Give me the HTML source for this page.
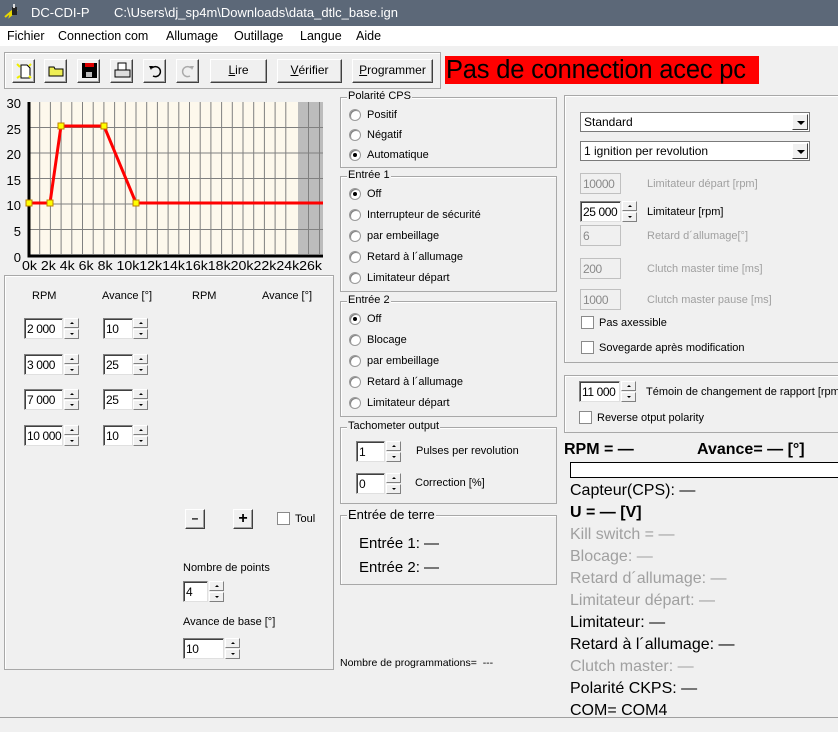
<!DOCTYPE html>
<html><head><meta charset="utf-8"><style>
*{box-sizing:border-box}
body{margin:0;width:838px;height:732px;background:#f0f0f0;font-family:"Liberation Sans",sans-serif;font-size:11px;color:#000;position:relative;overflow:hidden}
.a{position:absolute;white-space:nowrap}
.g{position:absolute;border:1px solid #a8a8a8;box-shadow:inset 1px 1px 0 #fff}
.gl{position:absolute;top:-8px;left:6px;background:#f0f0f0;padding:0 1px;font-size:11px}
.r{position:absolute;width:12px;height:12px;border-radius:50%;background:#fff;border:1px solid #9a9a9a;box-shadow:inset 1px 1px 0 #808080}
.r.on::after{content:"";position:absolute;left:3px;top:3px;width:4px;height:4px;border-radius:50%;background:#000}
.in{position:absolute;height:21px;background:#fff;border:1px solid;border-color:#808080 #e0e0e0 #e0e0e0 #808080;box-shadow:inset 1px 1px 0 #404040;padding:3px 0 0 2px;font-size:12px;white-space:nowrap;overflow:hidden;letter-spacing:-0.4px}
.in.d{color:#8a8a8a;background:#f0f0f0;box-shadow:none;border-color:#c0c0c0}
.sp{position:absolute;width:15px;height:21px}
.sp i{display:block;height:10px;background:#f0f0f0;border:1px solid;border-color:#fff #808080 #808080 #fff;margin-bottom:1px;position:relative}
.sp i::after{content:"";position:absolute;left:5px;top:3px;border-left:2px solid transparent;border-right:2px solid transparent}
.sp i.u::after{border-bottom:2px solid #000}
.sp i.dn::after{border-top:2px solid #000}
.btn{position:absolute;height:24px;background:#f0f0f0;border:1px solid;border-color:#fff #404040 #404040 #fff;box-shadow:inset -1px -1px 0 #a0a0a0;text-align:center;line-height:21px;font-size:12px}
.cb{position:absolute;width:13px;height:13px;background:#fff;border:1px solid #8a8a8a}
.dis{color:#a0a0a0}
.big{font-size:16px}
.sel{position:absolute;height:20px;background:#fff;border:1px solid #7a7a7a;font-size:12px;padding:2px 3px}
.sel b{position:absolute;right:1px;top:1px;width:16px;height:16px;background:#f0f0f0;border:1px solid;border-color:#fff #404040 #404040 #fff}
.sel b::after{content:"";position:absolute;left:4px;top:6px;border-left:4px solid transparent;border-right:4px solid transparent;border-top:4px solid #000}
</style></head><body>
<!-- title -->
<div class="a" style="left:0;top:0;width:838px;height:26px;background:#5c6878"></div>
<svg class="a" style="left:3px;top:3px" width="20" height="18"><path d="M2 14 L8 9 L7 13 L14 7" stroke="#e8d800" stroke-width="2" fill="none"/><rect x="9" y="4" width="5" height="8" fill="#222"/><rect x="10" y="1" width="2" height="4" fill="#ddd"/></svg>
<div class="a" style="left:31px;top:5px;color:#fff;font-size:13px">DC-CDI-P</div>
<div class="a" style="left:114px;top:5px;color:#fff;font-size:13px">C:\Users\dj_sp4m\Downloads\data_dtlc_base.ign</div>
<!-- menu -->
<div class="a" style="left:0;top:26px;width:838px;height:20px;background:#fff"></div>
<div class="a" style="left:7px;top:29px;font-size:12.5px">Fichier</div>
<div class="a" style="left:58px;top:29px;font-size:12.5px">Connection com</div>
<div class="a" style="left:166px;top:29px;font-size:12.5px">Allumage</div>
<div class="a" style="left:234px;top:29px;font-size:12.5px">Outillage</div>
<div class="a" style="left:300px;top:29px;font-size:12.5px">Langue</div>
<div class="a" style="left:356px;top:29px;font-size:12.5px">Aide</div>
<!-- toolbar -->
<div class="g" style="left:4px;top:52px;width:437px;height:37px"></div>
<div class="btn" style="left:12px;top:59px;width:23px"><svg width="20" height="20" style="margin-top:1px"><path d="M7 4h6l3 3v10H7z" fill="#fff" stroke="#000"/><path d="M3 3l3 3M17 3l-2 2M3 17l3-2M17 17l-2-2" stroke="#ee0" stroke-width="2"/></svg></div>
<div class="btn" style="left:44px;top:59px;width:23px"><svg width="20" height="20"><path d="M3 7h5l1 2h8v7H3z" fill="#ee5" stroke="#000"/></svg></div>
<div class="btn" style="left:77px;top:59px;width:23px"><svg width="20" height="20"><rect x="3" y="3" width="15" height="15" fill="#000"/><rect x="6" y="3" width="9" height="4" fill="#d00"/><rect x="7" y="12" width="6" height="5" fill="#bbb"/></svg></div>
<div class="btn" style="left:110px;top:59px;width:23px"><svg width="20" height="20"><rect x="6" y="3" width="8" height="7" fill="#fff" stroke="#000"/><rect x="3" y="10" width="15" height="7" fill="#ddd" stroke="#000"/></svg></div>
<div class="btn" style="left:143px;top:59px;width:23px"><svg width="20" height="20"><path d="M7 8a5 5 0 1 1 1 8" fill="none" stroke="#000" stroke-width="1.5"/><path d="M4 6l4 0l-2 4z" fill="#000"/></svg></div>
<div class="btn" style="left:176px;top:59px;width:23px"><svg width="20" height="20"><path d="M13 8a5 5 0 1 0 -1 8" fill="none" stroke="#aaa" stroke-width="1.5"/><path d="M16 6l-4 0l2 4z" fill="#aaa"/></svg></div>
<div class="btn" style="left:210px;top:59px;width:57px"><u>L</u>ire</div>
<div class="btn" style="left:277px;top:59px;width:65px"><u>V</u>érifier</div>
<div class="btn" style="left:352px;top:59px;width:81px"><u>P</u>rogrammer</div>
<div class="a" style="left:445px;top:56px;width:314px;height:28px;background:#f00;font-size:25.5px;line-height:29px;padding-left:1px;letter-spacing:-0.2px">Pas de connection acec pc</div>
<!-- chart -->
<svg class="a" style="left:0;top:95px" width="335" height="180" font-family="Liberation Sans" font-size="12">
<g transform="translate(0,-95)">
<rect x="29" y="102" width="269" height="152" fill="#fdf8ec"/>
<rect x="298" y="102" width="25" height="152" fill="#bcbcbc"/>
<g stroke="#808080" stroke-width="1">
<path d="M39.7 102V254M50.4 102V254M61.1 102V254M71.8 102V254M82.5 102V254M93.2 102V254M103.9 102V254M114.6 102V254M125.3 102V254M136 102V254M146.7 102V254M157.4 102V254M168.1 102V254M178.8 102V254M189.5 102V254M200.2 102V254M210.9 102V254M221.6 102V254M232.3 102V254M243 102V254M253.7 102V254M264.4 102V254M275.1 102V254M285.8 102V254M308.5 102V254M319.5 102V254"/>
<path d="M29 127.5H323M29 153H323M29 178.5H323M29 204H323M29 229.5H323"/>
</g>
<path d="M29 102V256H323" stroke="#000" stroke-width="3" fill="none"/>
<path d="M29 203H50L61 126H104L136 203H323" stroke="#f00" stroke-width="3" fill="none"/>
<g fill="#ff0" stroke="#c08000"><rect x="26" y="200" width="6" height="6"/><rect x="47" y="200" width="6" height="6"/><rect x="58" y="123" width="6" height="6"/><rect x="101" y="123" width="6" height="6"/><rect x="133" y="200" width="6" height="6"/></g>
<g text-anchor="end" font-size="13"><text x="21" y="108">30</text><text x="21" y="134">25</text><text x="21" y="159">20</text><text x="21" y="185">15</text><text x="21" y="210">10</text><text x="21" y="236">5</text><text x="21" y="262">0</text></g>
<text x="22" y="270" font-size="13" textLength="300" lengthAdjust="spacingAndGlyphs">0k 2k 4k 6k 8k 10k12k14k16k18k20k22k24k26k</text>
</g></svg>
<!-- left panel -->
<div class="g" style="left:4px;top:275px;width:330px;height:395px"></div>
<div class="a" style="left:32px;top:290px">RPM</div>
<div class="a" style="left:102px;top:290px">Avance [°]</div>
<div class="a" style="left:192px;top:290px">RPM</div>
<div class="a" style="left:262px;top:290px">Avance [°]</div>
<div class="in" style="left:24px;top:318px;width:39px">2 000</div><div class="sp" style="left:64px;top:318px"><i class="u"></i><i class="dn"></i></div>
<div class="in" style="left:103px;top:318px;width:30px">10</div><div class="sp" style="left:133px;top:318px"><i class="u"></i><i class="dn"></i></div>
<div class="in" style="left:24px;top:354px;width:39px">3 000</div><div class="sp" style="left:64px;top:354px"><i class="u"></i><i class="dn"></i></div>
<div class="in" style="left:103px;top:354px;width:30px">25</div><div class="sp" style="left:133px;top:354px"><i class="u"></i><i class="dn"></i></div>
<div class="in" style="left:24px;top:389px;width:39px">7 000</div><div class="sp" style="left:64px;top:389px"><i class="u"></i><i class="dn"></i></div>
<div class="in" style="left:103px;top:389px;width:30px">25</div><div class="sp" style="left:133px;top:389px"><i class="u"></i><i class="dn"></i></div>
<div class="in" style="left:24px;top:425px;width:39px">10 000</div><div class="sp" style="left:64px;top:425px"><i class="u"></i><i class="dn"></i></div>
<div class="in" style="left:103px;top:425px;width:30px">10</div><div class="sp" style="left:133px;top:425px"><i class="u"></i><i class="dn"></i></div>
<div class="btn" style="left:185px;top:509px;width:20px;height:20px;line-height:16px;font-weight:bold">–</div>
<div class="btn" style="left:233px;top:509px;width:20px;height:20px;line-height:17px;font-weight:bold;font-size:16px">+</div>
<div class="cb" style="left:277px;top:512px"></div><div class="a" style="left:295px;top:513px">Toul</div>
<div class="a" style="left:183px;top:562px">Nombre de points</div>
<div class="in" style="left:183px;top:581px;width:25px">4</div><div class="sp" style="left:209px;top:581px"><i class="u"></i><i class="dn"></i></div>
<div class="a" style="left:183px;top:616px">Avance de base [°]</div>
<div class="in" style="left:183px;top:638px;width:41px">10</div><div class="sp" style="left:225px;top:638px"><i class="u"></i><i class="dn"></i></div>
<!-- middle groups -->
<div class="g" style="left:340px;top:97px;width:217px;height:71px"><span class="gl">Polarité CPS</span></div>
<div class="r" style="left:349px;top:109px"></div><div class="a" style="left:367px;top:109px">Positif</div>
<div class="r" style="left:349px;top:129px"></div><div class="a" style="left:367px;top:129px">Négatif</div>
<div class="r on" style="left:349px;top:149px"></div><div class="a" style="left:367px;top:149px">Automatique</div>
<div class="g" style="left:340px;top:176px;width:217px;height:116px"><span class="gl">Entrée 1</span></div>
<div class="r on" style="left:349px;top:188px"></div><div class="a" style="left:367px;top:188px">Off</div>
<div class="r" style="left:349px;top:209px"></div><div class="a" style="left:367px;top:209px">Interrupteur de sécurité</div>
<div class="r" style="left:349px;top:230px"></div><div class="a" style="left:367px;top:230px">par embeillage</div>
<div class="r" style="left:349px;top:251px"></div><div class="a" style="left:367px;top:251px">Retard à l´allumage</div>
<div class="r" style="left:349px;top:272px"></div><div class="a" style="left:367px;top:272px">Limitateur départ</div>
<div class="g" style="left:340px;top:301px;width:217px;height:116px"><span class="gl">Entrée 2</span></div>
<div class="r on" style="left:349px;top:313px"></div><div class="a" style="left:367px;top:313px">Off</div>
<div class="r" style="left:349px;top:334px"></div><div class="a" style="left:367px;top:334px">Blocage</div>
<div class="r" style="left:349px;top:355px"></div><div class="a" style="left:367px;top:355px">par embeillage</div>
<div class="r" style="left:349px;top:376px"></div><div class="a" style="left:367px;top:376px">Retard à l´allumage</div>
<div class="r" style="left:349px;top:397px"></div><div class="a" style="left:367px;top:397px">Limitateur départ</div>
<div class="g" style="left:340px;top:427px;width:217px;height:77px"><span class="gl">Tachometer output</span></div>
<div class="in" style="left:356px;top:441px;width:29px">1</div><div class="sp" style="left:386px;top:441px"><i class="u"></i><i class="dn"></i></div>
<div class="a" style="left:416px;top:445px">Pulses per revolution</div>
<div class="in" style="left:356px;top:473px;width:29px">0</div><div class="sp" style="left:386px;top:473px"><i class="u"></i><i class="dn"></i></div>
<div class="a" style="left:415px;top:477px">Correction [%]</div>
<div class="g" style="left:340px;top:515px;width:217px;height:70px"><span class="gl" style="font-size:13px;top:-9px">Entrée de terre</span></div>
<div class="a big" style="left:359px;top:535px;font-size:15px">Entrée 1: —</div>
<div class="a big" style="left:359px;top:559px;font-size:15px">Entrée 2: —</div>
<div class="a" style="left:340px;top:657px;font-size:10.5px">Nombre de programmations=&nbsp; ---</div>
<!-- right -->
<div class="g" style="left:564px;top:95px;width:280px;height:268px"></div>
<div class="sel" style="left:580px;top:112px;width:230px">Standard<b></b></div>
<div class="sel" style="left:580px;top:141px;width:230px">1 ignition per revolution<b></b></div>
<div class="in d" style="left:580px;top:173px;width:41px">10000</div><div class="a dis" style="left:647px;top:178px">Limitateur départ [rpm]</div>
<div class="in" style="left:580px;top:201px;width:41px">25 000</div><div class="sp" style="left:622px;top:201px"><i class="u"></i><i class="dn"></i></div><div class="a" style="left:647px;top:206px">Limitateur [rpm]</div>
<div class="in d" style="left:580px;top:225px;width:41px">6</div><div class="a dis" style="left:647px;top:230px">Retard d´allumage[°]</div>
<div class="in d" style="left:580px;top:258px;width:41px">200</div><div class="a dis" style="left:647px;top:263px">Clutch master time [ms]</div>
<div class="in d" style="left:580px;top:289px;width:41px">1000</div><div class="a dis" style="left:647px;top:294px">Clutch master pause [ms]</div>
<div class="cb" style="left:581px;top:316px"></div><div class="a" style="left:599px;top:317px">Pas axessible</div>
<div class="cb" style="left:581px;top:341px"></div><div class="a" style="left:599px;top:342px">Sovegarde après modification</div>
<div class="g" style="left:564px;top:375px;width:280px;height:58px"></div>
<div class="in" style="left:579px;top:381px;width:41px">11 000</div><div class="sp" style="left:621px;top:381px"><i class="u"></i><i class="dn"></i></div><div class="a" style="left:646px;top:386px">Témoin de changement de rapport [rpm]</div>
<div class="cb" style="left:579px;top:411px"></div><div class="a" style="left:597px;top:412px">Reverse otput polarity</div>
<div class="a" style="left:564px;top:441px;font-size:16px;font-weight:bold">RPM = —</div>
<div class="a" style="left:697px;top:441px;font-size:16px;font-weight:bold">Avance= — [°]</div>
<div class="a" style="left:570px;top:462px;width:280px;height:16px;background:#fff;border:1px solid #000"></div>
<div class="a big" style="left:570px;top:482px">Capteur(CPS): —</div>
<div class="a big" style="left:570px;top:504px;font-weight:bold">U = — [V]</div>
<div class="a big dis" style="left:570px;top:526px">Kill switch = —</div>
<div class="a big dis" style="left:570px;top:548px">Blocage: —</div>
<div class="a big dis" style="left:570px;top:570px">Retard d´allumage: —</div>
<div class="a big dis" style="left:570px;top:592px">Limitateur départ: —</div>
<div class="a big" style="left:570px;top:614px">Limitateur: —</div>
<div class="a big" style="left:570px;top:636px">Retard à l´allumage: —</div>
<div class="a big dis" style="left:570px;top:658px">Clutch master: —</div>
<div class="a big" style="left:570px;top:680px">Polarité CKPS: —</div>
<div class="a big" style="left:570px;top:702px">COM= COM4</div>
<div class="a" style="left:0;top:717px;width:838px;height:15px;background:#f0f0f0;border-top:1px solid #a0a0a0"></div>
</body></html>
